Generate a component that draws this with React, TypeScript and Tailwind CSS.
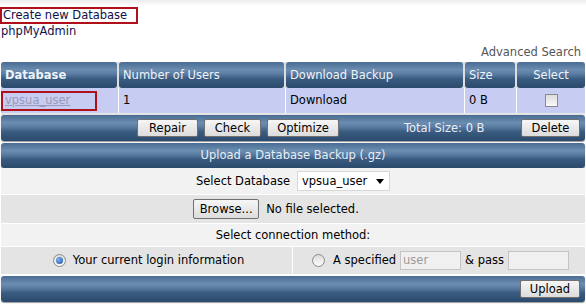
import React from "react";

const barBg =
  "bg-[linear-gradient(to_bottom,#4a6c93_0%,#6a8db0_30%,#5c7ea4_45%,#3a5b80_65%,#2b4a6c_100%)]";

function Btn({ children, className = "" }: { children: React.ReactNode; className?: string }) {
  return (
    <button
      className={`h-[18px] text-[11.5px] leading-none text-black border border-[#707070] rounded-[2px] bg-[linear-gradient(to_bottom,#f6f6f6,#dcdcdc)] flex items-center justify-center ${className}`}
    >
      {children}
    </button>
  );
}

function Radio({ checked }: { checked?: boolean }) {
  return (
    <span className="inline-flex w-[13px] h-[13px] rounded-full border border-[#8a8a8a] bg-[linear-gradient(to_bottom,#dcdcdc,#fafafa)] items-center justify-center">
      {checked && <span className="w-[7px] h-[7px] rounded-full bg-[radial-gradient(circle_at_35%_35%,#7fb0f0,#1b4fa0)]" />}
    </span>
  );
}

export default function App() {
  const font = { fontFamily: '"DejaVu Sans", Verdana, sans-serif' };
  return (
    <div className="w-[586px] h-[305px] bg-white text-[11.5px] text-black overflow-hidden" style={font}>
      <div className="h-[6px] bg-[linear-gradient(to_bottom,#ececec,#ffffff)]" />
      <div>
        <div className="inline-block border-2 border-[#b0101a] mt-[1px] pl-[1px] pr-[9px] leading-[13px] text-[#10104a]">
          Create new Database
        </div>
        <div className="leading-[14px] pl-[1px] text-[#10104a]">phpMyAdmin</div>
        <div className="text-right pr-[5px] mt-[7px] leading-[14px] text-[#555]">Advanced Search</div>
      </div>
      <div className="px-[1px] mt-[3px]">
        <div className="flex gap-[2px] bg-[#dedede] rounded-t-[2px]">
          <div className={`w-[116px] h-[26px] ${barBg} rounded-[3px] text-[#eef3f8] font-bold flex items-center pl-[4px]`}>Database</div>
          <div className={`w-[165px] h-[26px] ${barBg} rounded-[3px] text-[#eef3f8] flex items-center pl-[4px]`}>Number of Users</div>
          <div className={`w-[177px] h-[26px] ${barBg} rounded-[3px] text-[#eef3f8] flex items-center pl-[4px]`}>Download Backup</div>
          <div className={`w-[50px] h-[26px] ${barBg} rounded-[3px] text-[#eef3f8] flex items-center pl-[4px]`}>Size</div>
          <div className={`flex-1 h-[26px] ${barBg} rounded-[3px] text-[#eef3f8] flex items-center justify-center`}>Select</div>
        </div>
        <div className="flex h-[26px] bg-[#c6ccf2] border-b border-[#e8e8e8]">
          <div className="w-[118px] flex items-center border-r border-white">
            <span className="border-2 border-[#b0101a] w-[96px] h-[20px] flex items-center pl-[2px] text-[#9a9ab8] underline">vpsua_user</span>
          </div>
          <div className="w-[167px] flex items-center pl-[4px] border-r border-white">1</div>
          <div className="w-[179px] flex items-center pl-[4px] border-r border-white">Download</div>
          <div className="w-[52px] flex items-center pl-[4px] border-r border-white">0 B</div>
          <div className="flex-1 flex items-center justify-center">
            <span className="w-[13px] h-[13px] border border-[#8a8a8a] bg-[linear-gradient(to_bottom,#dcdcdc,#fafafa)]" />
          </div>
        </div>
        <div className="h-[1px] bg-[#e0e0e0]" />
        <div className={`h-[26px] ${barBg} rounded-[3px] flex items-center shadow-[0_1px_1px_#999]`}>
          <div className="flex gap-[6px] ml-[136px]">
            <Btn className="w-[61px]">Repair</Btn>
            <Btn className="w-[57px]">Check</Btn>
            <Btn className="w-[72px]">Optimize</Btn>
          </div>
          <div className="ml-[65px] text-[#e8eef5]">Total Size: 0 B</div>
          <Btn className="ml-auto mr-[5px] w-[59px]">Delete</Btn>
        </div>
        <div className="h-[2px]" />
        <div className={`h-[25px] ${barBg} rounded-[3px] flex items-center justify-center text-[#e8eef5] shadow-[0_1px_1px_#999]`}>
          Upload a Database Backup (.gz)
        </div>
        <div className="h-[27px] bg-[#f2f2f2] border-b border-white flex items-center justify-center gap-[7px]">
          <span>Select Database</span>
          <span className="h-[20px] w-[93px] bg-white border border-[#d8d8d8] flex items-center pl-[4px] gap-[9px]">
            vpsua_user
            <svg width="8" height="5" viewBox="0 0 8 5"><path d="M0 0h8L4 5z" fill="#000" /></svg>
          </span>
        </div>
        <div className="h-[29px] bg-[#e4e4e4] border-b border-white flex items-center justify-center gap-[7px] pr-[34px]">
          <Btn className="h-[20px] w-[66px]">Browse...</Btn>
          <span>No file selected.</span>
        </div>
        <div className="h-[23px] bg-[#f2f2f2] border-b border-white flex items-center justify-center">
          Select connection method:
        </div>
        <div className="h-[27px] bg-[#e4e4e4] flex">
          <div className="w-[292px] flex items-center justify-center gap-[7px] border-r border-white pl-[4px]">
            <Radio checked />
            <span>Your current login information</span>
          </div>
          <div className="flex-1 flex items-center justify-end pr-[16px] gap-[4px]">
            <Radio />
            <span className="ml-[4px]">A specified</span>
            <span className="w-[61px] h-[19px] bg-[#f0f0f0] border border-[#c4c4c4] text-[#9a9a9a] flex items-center pl-[2px]">user</span>
            <span>&amp; pass</span>
            <span className="w-[61px] h-[19px] bg-[#f0f0f0] border border-[#c4c4c4]" />
          </div>
        </div>
        <div className="h-[2px]" />
        <div className={`h-[26px] ${barBg} rounded-[3px] flex items-center justify-end pr-[5px] shadow-[0_1px_1px_#999]`}>
          <Btn className="w-[60px]">Upload</Btn>
        </div>
      </div>
    </div>
  );
}
